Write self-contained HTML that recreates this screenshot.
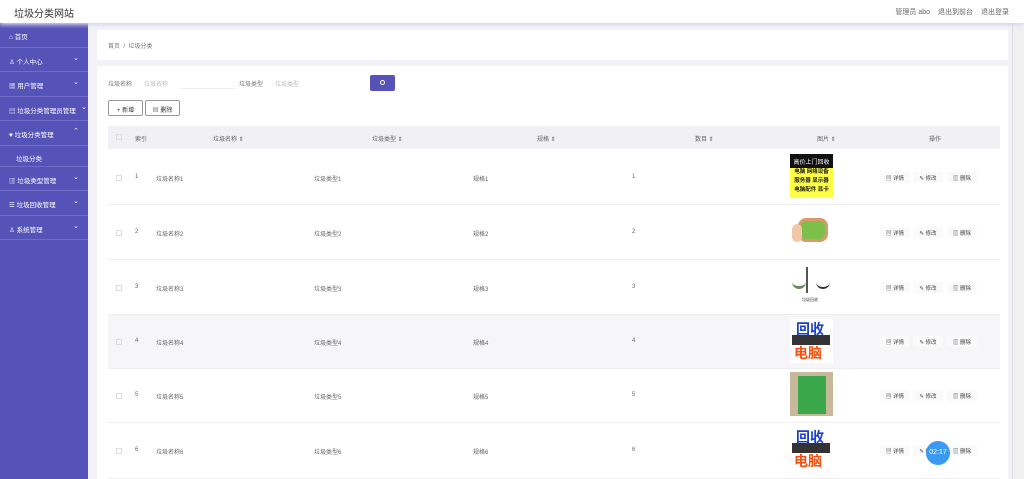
<!DOCTYPE html>
<html><head><meta charset="utf-8"><style>
*{margin:0;padding:0;box-sizing:border-box}
body{width:1024px;height:479px;overflow:hidden;background:#f3f3f7;font-family:"Liberation Sans","Noto Sans CJK SC",sans-serif;position:relative;color:#555}
.hd{position:absolute;left:0;top:0;width:1024px;height:23px;background:#fff;box-shadow:0 2px 4px #d8d6f4;z-index:2}
.hd .t{position:absolute;left:14px;top:5px;font-size:10px;color:#333}
.hd .r{position:absolute;right:15px;top:7px;font-size:7px;color:#666}
.hd .r span{margin-left:8px}
.sb{position:absolute;left:0;top:23px;width:88px;height:456px;background:#5553b7}
.mi{height:24.5px;border-bottom:1px solid #6f6dc8;color:#fff;font-size:6.5px;padding:8px 0 0 9px;position:relative}
.mi .a{position:absolute;right:9px;top:6px;font-size:7px}
.sub{height:21px;font-size:6.5px;color:#fff;padding:7px 0 0 16px;border-bottom:1px solid #6f6dc8}
.card{position:absolute;background:#fff}
.sm{font-size:6px;color:#999;position:absolute}
.btn{position:absolute;height:16px;border:1px solid #999;border-radius:2px;font-size:6px;color:#333;text-align:center;padding-top:4px;background:#fff}
.th{position:absolute;left:108px;top:126px;width:892px;height:23px;background:#f0f0f5}
.c{position:absolute;font-size:6px;color:#666}
.row{position:absolute;left:108px;width:892px;border-bottom:1px solid #eee}
.op{position:absolute;font-size:5.5px;color:#444;height:11px;width:30px;background:#fafafa;text-align:center;padding-top:2px}
.img{position:absolute;left:790px;width:43px;height:44px}
.cb{position:absolute;left:116px;width:6px;height:6px;border:1px solid #ddd}
</style></head><body>
<div class="hd"><div class="t">垃圾分类网站</div><div class="r">管理员 abo<span>退出到前台</span><span>退出登录</span></div></div>
<div class="sb">
<div class="mi">⌂ 首页</div>
<div class="mi">♙ 个人中心<span class="a">⌄</span></div>
<div class="mi">▦ 用户管理<span class="a">⌄</span></div>
<div class="mi">▤ 垃圾分类管理员管理<span class="a" style="right:1px">⌄</span></div>
<div class="mi">♥ 垃圾分类管理<span class="a">⌃</span></div>
<div class="sub">垃圾分类</div>
<div class="mi">▥ 垃圾类型管理<span class="a">⌄</span></div>
<div class="mi">☰ 垃圾回收管理<span class="a">⌄</span></div>
<div class="mi">♙ 系统管理<span class="a">⌄</span></div>
</div>
<div style="position:absolute;left:1012px;top:23px;width:12px;height:456px;background:#f0f0f0;border-left:1px solid #ddd"></div>
<div class="card" style="left:97px;top:30px;width:911px;height:30px"><span class="sm" style="left:11px;top:11px;color:#777">首页 &nbsp;/&nbsp; 垃圾分类</span></div>
<div class="card" style="left:97px;top:66px;width:911px;height:413px"></div>
<span class="sm" style="left:108px;top:79px;color:#777">垃圾名称</span>
<span class="sm" style="left:144px;top:79px;color:#bbb">垃圾名称</span>
<div style="position:absolute;left:180px;top:88px;width:56px;height:1px;background:#eee"></div>
<span class="sm" style="left:239px;top:79px;color:#777">垃圾类型</span>
<span class="sm" style="left:275px;top:79px;color:#bbb">垃圾类型</span>
<div style="position:absolute;left:370px;top:75px;width:25px;height:16px;background:#5553b7;border-radius:2px"><div style="position:absolute;left:10px;top:5px;width:5px;height:5px;border:1px solid #fff;border-radius:3px"></div></div>
<div class="btn" style="left:108px;top:100px;width:35px">+ 新增</div>
<div class="btn" style="left:145px;top:100px;width:35px">▤ 删除</div>
<div class="th"></div>
<div class="cb" style="top:134px"></div>
<span class="c" style="left:135px;top:134px">索引</span>
<span class="c" style="left:213px;top:134px">垃圾名称 ⇕</span>
<span class="c" style="left:372px;top:134px">垃圾类型 ⇕</span>
<span class="c" style="left:537px;top:134px">规格 ⇕</span>
<span class="c" style="left:695px;top:134px">数目 ⇕</span>
<span class="c" style="left:817px;top:134px">图片 ⇕</span>
<span class="c" style="left:929px;top:134px">操作</span>

<div class="row" style="top:150px;height:55px"></div>
<div class="row" style="top:205px;height:55px"></div>
<div class="row" style="top:260px;height:55px"></div>
<div class="row" style="top:315px;height:54px;background:#f6f6f9"></div>
<div class="row" style="top:369px;height:54px"></div>
<div class="row" style="top:423px;height:56px"></div>

<div class="cb" style="top:175px"></div><span class="c" style="left:135px;top:174px">1</span><span class="c" style="left:156px;top:174px">垃圾名称1</span><span class="c" style="left:314px;top:174px">垃圾类型1</span><span class="c" style="left:473px;top:174px">规格1</span><span class="c" style="left:632px;top:174px">1</span>
<div class="cb" style="top:230px"></div><span class="c" style="left:135px;top:229px">2</span><span class="c" style="left:156px;top:229px">垃圾名称2</span><span class="c" style="left:314px;top:229px">垃圾类型2</span><span class="c" style="left:473px;top:229px">规格2</span><span class="c" style="left:632px;top:229px">2</span>
<div class="cb" style="top:285px"></div><span class="c" style="left:135px;top:284px">3</span><span class="c" style="left:156px;top:284px">垃圾名称3</span><span class="c" style="left:314px;top:284px">垃圾类型3</span><span class="c" style="left:473px;top:284px">规格3</span><span class="c" style="left:632px;top:284px">3</span>
<div class="cb" style="top:339px"></div><span class="c" style="left:135px;top:338px">4</span><span class="c" style="left:156px;top:338px">垃圾名称4</span><span class="c" style="left:314px;top:338px">垃圾类型4</span><span class="c" style="left:473px;top:338px">规格4</span><span class="c" style="left:632px;top:338px">4</span>
<div class="cb" style="top:393px"></div><span class="c" style="left:135px;top:392px">5</span><span class="c" style="left:156px;top:392px">垃圾名称5</span><span class="c" style="left:314px;top:392px">垃圾类型5</span><span class="c" style="left:473px;top:392px">规格5</span><span class="c" style="left:632px;top:392px">5</span>
<div class="cb" style="top:448px"></div><span class="c" style="left:135px;top:447px">6</span><span class="c" style="left:156px;top:447px">垃圾名称6</span><span class="c" style="left:314px;top:447px">垃圾类型6</span><span class="c" style="left:473px;top:447px">规格6</span><span class="c" style="left:632px;top:447px">6</span>

<div class="img" style="top:154px;background:#ff4"><div style="background:#111;color:#fff;font-size:6px;height:14px;text-align:center;padding-top:3px">高价上门回收</div><div style="font-size:5.5px;color:#222;line-height:9px;text-align:center;font-weight:bold">电脑 网络设备<br>服务器 显示器<br>电脑配件 显卡</div></div>
<div class="img" style="top:210px"><div style="position:absolute;left:8px;top:8px;width:30px;height:24px;background:#7cc04a;border:3px solid #d89a6a;border-radius:8px"></div><div style="position:absolute;left:2px;top:14px;width:10px;height:18px;background:#f2c8a8;border-radius:5px"></div></div>
<div class="img" style="top:265px"><div style="position:absolute;left:2px;top:12px;width:14px;height:12px;border-bottom:3px solid #6a8a5a;border-radius:0 0 8px 8px"></div><div style="position:absolute;left:26px;top:14px;width:14px;height:10px;border-bottom:2px solid #333;border-radius:0 0 8px 8px"></div><div style="position:absolute;left:16px;top:2px;width:8px;height:26px;border-left:2px solid #555"></div><div style="position:absolute;left:12px;top:32px;font-size:4px;color:#333">垃圾回收</div></div>
<div class="img" style="top:319px;background:#fff"><div style="position:absolute;left:6px;top:0;font-size:14px;color:#1840c8;font-weight:bold">回收</div><div style="position:absolute;left:2px;top:16px;width:38px;height:10px;background:#333"></div><div style="position:absolute;left:4px;top:24px;font-size:14px;color:#f05010;font-weight:bold">电脑</div></div>
<div class="img" style="top:372px;background:#c8b89a"><div style="position:absolute;left:8px;top:4px;width:28px;height:38px;background:#3aa84a"></div></div>
<div class="img" style="top:427px;background:#fff"><div style="position:absolute;left:6px;top:0;font-size:14px;color:#1840c8;font-weight:bold">回收</div><div style="position:absolute;left:2px;top:16px;width:38px;height:10px;background:#333"></div><div style="position:absolute;left:4px;top:24px;font-size:14px;color:#f05010;font-weight:bold">电脑</div></div>

<div class="op" style="left:880px;top:172px">▤ 详情</div><div class="op" style="left:913px;top:172px">✎ 修改</div><div class="op" style="left:947px;top:172px">▥ 删除</div>
<div class="op" style="left:880px;top:227px">▤ 详情</div><div class="op" style="left:913px;top:227px">✎ 修改</div><div class="op" style="left:947px;top:227px">▥ 删除</div>
<div class="op" style="left:880px;top:282px">▤ 详情</div><div class="op" style="left:913px;top:282px">✎ 修改</div><div class="op" style="left:947px;top:282px">▥ 删除</div>
<div class="op" style="left:880px;top:336px">▤ 详情</div><div class="op" style="left:913px;top:336px">✎ 修改</div><div class="op" style="left:947px;top:336px">▥ 删除</div>
<div class="op" style="left:880px;top:390px">▤ 详情</div><div class="op" style="left:913px;top:390px">✎ 修改</div><div class="op" style="left:947px;top:390px">▥ 删除</div>
<div class="op" style="left:880px;top:445px">▤ 详情</div><div class="op" style="left:913px;top:445px">✎ 修改</div><div class="op" style="left:947px;top:445px">▥ 删除</div>
<div style="position:absolute;left:926px;top:441px;width:24px;height:24px;border-radius:12px;background:#3a9af0;color:#fff;font-size:7px;text-align:center;padding-top:8px">02:17</div>
</body></html>
